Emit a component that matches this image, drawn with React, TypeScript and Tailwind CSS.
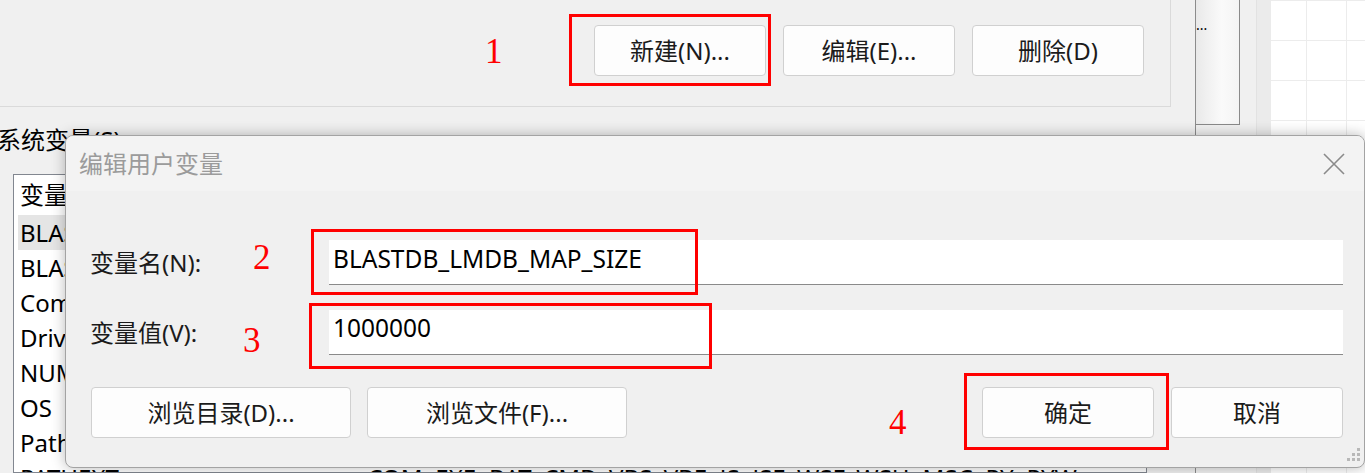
import { FC } from "react";

const font = "font-['Noto_Sans','Noto_Sans_CJK_SC',sans-serif]";

const btn =
  "h-[51px] rounded-[4px] border border-[#d0d0d0] bg-[#fdfdfd] text-[24px] text-[#1b1b1b] flex items-center justify-center";

const sysVars: [string, string][] = [
  ["BLASTDB", "D:\\blast\\db"],
  ["BLASTDB_LMDB_MAP_SIZE", "1000000"],
  ["ComSpec", "C:\\Windows\\system32\\cmd.exe"],
  ["DriverData", "C:\\Windows\\System32\\Drivers\\DriverData"],
  ["NUMBER_OF_PROCESSORS", "16"],
  ["OS", "Windows_NT"],
  ["Path", "C:\\Windows\\system32;C:\\Windows;C:\\Windows\\System32\\Wbem"],
  ["PATHEXT", ".COM;.EXE;.BAT;.CMD;.VBS;.VBE;.JS;.JSE;.WSF;.WSH;.MSC;.PY;.PYW"],
];

const RedBox: FC<{ cls: string }> = ({ cls }) => (
  <div className={`absolute border-[3px] border-[#ff0000] ${cls}`} />
);

const RedNum: FC<{ n: string; cls: string }> = ({ n, cls }) => (
  <span
    className={`absolute font-['Liberation_Serif',serif] text-[35px] leading-none text-[#ff0000] ${cls}`}
  >
    {n}
  </span>
);

const EditDialog: FC = () => (
  <div className="absolute left-[65px] top-[135px] w-[1300px] h-[333px] rounded-[8px] border border-[#a3a3a3] bg-[#f0f0f0] shadow-[0_0_14px_rgba(0,0,0,0.28)] overflow-hidden flex flex-col">
    <div className="h-[55px] shrink-0 bg-[#f3f3f3] flex items-center justify-between pl-[13px] pr-[19px]">
      <span className="text-[24px] text-[#9b9b9b]">编辑用户变量</span>
      <svg width="22" height="22" viewBox="0 0 22 22" className="mt-[1px]">
        <path d="M1 1L21 21M21 1L1 21" stroke="#8a8a8a" strokeWidth="1.6" fill="none" />
      </svg>
    </div>
    <div className="flex flex-col pt-[49px] pr-[21px]">
      <div className="flex items-center h-[45px]">
        <div className="w-[263px] pl-[24px] text-[24px] text-[#1b1b1b]">变量名(N):</div>
        <div className="flex-1 h-full bg-white border-b border-[#8a8a8a] flex items-center pl-[4px] pb-[6px] text-[24.5px] text-black">
          BLASTDB_LMDB_MAP_SIZE
        </div>
      </div>
      <div className="flex items-center h-[45px] mt-[25px]">
        <div className="w-[263px] pl-[24px] text-[24px] text-[#1b1b1b]">变量值(V):</div>
        <div className="flex-1 h-full bg-white border-b border-[#8a8a8a] flex items-center pl-[4px] pb-[8px] text-[24.5px] text-black">
          1000000
        </div>
      </div>
      <div className="flex items-center mt-[32px] pl-[25px]">
        <div className={`${btn} w-[260px]`}>浏览目录(D)...</div>
        <div className={`${btn} w-[260px] ml-[16px]`}>浏览文件(F)...</div>
        <div className="flex-1" />
        <div className={`${btn} w-[172px]`}>确定</div>
        <div className={`${btn} w-[172px] ml-[17px]`}>取消</div>
      </div>
    </div>
    <svg width="16" height="16" viewBox="0 0 16 16" className="absolute right-[2px] bottom-[4px]">
      <g fill="#b8b8b8">
        <rect x="11" y="1" width="3" height="3" />
        <rect x="6" y="6" width="3" height="3" />
        <rect x="11" y="6" width="3" height="3" />
        <rect x="1" y="11" width="3" height="3" />
        <rect x="6" y="11" width="3" height="3" />
        <rect x="11" y="11" width="3" height="3" />
      </g>
    </svg>
  </div>
);

const App: FC = () => {
  return (
    <div className={`relative w-[1365px] h-[473px] overflow-hidden bg-[#f0f0f0] ${font}`}>
      <div className="flex h-full">
        {/* environment variables window */}
        <div className="w-[1195px] shrink-0 flex flex-col">
          <div className="w-[1171px] h-[107px] shrink-0 border-r border-b border-[#dadada] flex justify-end items-start gap-[17px] pt-[25px] pr-[26px]">
            <div className={`${btn} w-[172px]`}>新建(N)...</div>
            <div className={`${btn} w-[172px]`}>编辑(E)...</div>
            <div className={`${btn} w-[172px]`}>删除(D)</div>
          </div>
          <div className="shrink-0 mt-[17px] -ml-[3px] text-[24px] leading-[32px] text-black whitespace-nowrap">
            系统变量(S)
          </div>
          <div className="ml-[13px] mt-[18px] w-[1134px] flex-1 min-h-0 overflow-hidden border border-[#828790] bg-white pl-[4px] pr-[4px]">
            <div className="h-[40px] flex items-center pl-[2px] text-[24px] text-black">
              <span className="w-[342px]">变量</span>
              <span>值</span>
            </div>
            {sysVars.map(([k, v], i) => (
              <div
                key={k}
                className={`h-[35px] flex items-center pl-[2px] text-[24px] text-black whitespace-nowrap ${
                  i === 0 ? "bg-[#e5e5e5]" : ""
                }`}
              >
                <span className="w-[342px] shrink-0 overflow-hidden">{k}</span>
                <span>{v}</span>
              </div>
            ))}
          </div>
        </div>
        <div className="w-px shrink-0 bg-[#8c8c8c]" />
        {/* neighbouring window strip */}
        <div className="w-[44px] shrink-0 h-[125px] border-r border-b border-[#8a8a8a] bg-[linear-gradient(to_right,#e9e9e9,#fafafa_60%,#f4f4f4)] text-[14px] leading-none pt-[18px] text-black">
          ...
        </div>
        <div className="w-[16px] shrink-0" />
        <div className="w-[15px] shrink-0 border-l border-[#e2e2e2] bg-[#ebebeb]" />
        <div className="flex-1 bg-white bg-[linear-gradient(to_right,#ececec_1px,transparent_1px),linear-gradient(to_bottom,#ececec_1px,transparent_1px)] bg-[size:40px_40px] bg-[position:35px_0px]" />
      </div>

      <EditDialog />

      <RedBox cls="left-[569px] top-[14px] w-[202px] h-[72px]" />
      <RedBox cls="left-[311px] top-[229px] w-[387px] h-[66px]" />
      <RedBox cls="left-[309px] top-[303px] w-[403px] h-[66px]" />
      <RedBox cls="left-[964px] top-[373px] w-[205px] h-[77px]" />
      <RedNum n="1" cls="left-[485px] top-[34px]" />
      <RedNum n="2" cls="left-[253px] top-[240px]" />
      <RedNum n="3" cls="left-[243px] top-[323px]" />
      <RedNum n="4" cls="left-[889px] top-[405px]" />
    </div>
  );
};

export default App;
